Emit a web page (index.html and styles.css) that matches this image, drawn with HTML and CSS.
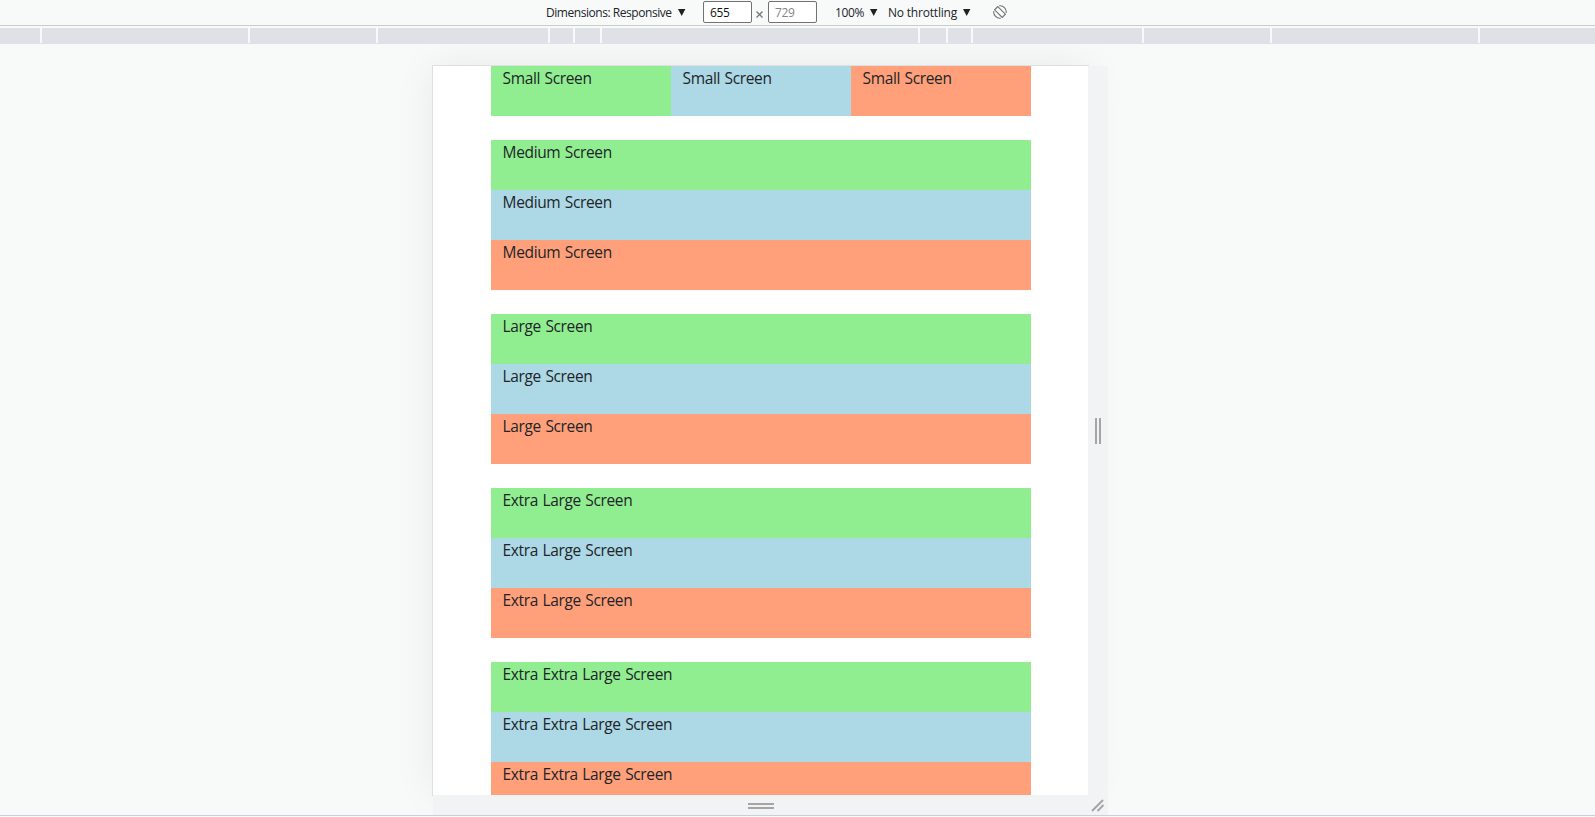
FILE: index.html
```
<!DOCTYPE html>
<html lang="en">
<head>
<meta charset="utf-8">
<title>Responsive grid</title>
<link rel="stylesheet" href="styles.css">
</head>
<body>
<header class="toolbar">
  <span class="label label-dimensions">Dimensions: Responsive</span>
  <svg class="caret caret-dimensions" viewBox="0 0 8 7"><path d="M0 0h7.4L3.7 7z"/></svg>
  <span class="size">655</span>
  <svg class="times" viewBox="0 0 7 7"><path d="M.5.5l6 6M6.5.5L.5 6.5"/></svg>
  <span class="size size-muted">729</span>
  <span class="label label-zoom">100%</span>
  <svg class="caret caret-zoom" viewBox="0 0 8 7"><path d="M0 0h7.4L3.7 7z"/></svg>
  <span class="label label-throttle">No throttling</span>
  <svg class="caret caret-throttle" viewBox="0 0 8 7"><path d="M0 0h7.4L3.7 7z"/></svg>
  <svg class="rotate" viewBox="0 0 14 14"><path d="M4.8 1.6L12.4 9.2L9.2 12.4L1.6 4.8zM6.2.8A6.2 6.2 0 0 1 13.2 7.8M.8 6.2A6.2 6.2 0 0 0 7.8 13.2"/></svg>
</header>
<div class="ruler">
  <i style="width:40px"></i><i style="width:206px"></i><i style="width:126px"></i><i style="width:170px"></i><i style="width:23px"></i><i style="width:25px"></i><i style="width:316px"></i><i style="width:26px"></i><i style="width:23px"></i><i style="width:169px"></i><i style="width:126px"></i><i style="width:206px"></i><i style="width:115px"></i>
</div>
<main class="stage">
  <div class="device">
    <div class="screen">
      <div class="container">
        <section class="row row-split"><div class="col green">Small Screen</div><div class="col blue">Small Screen</div><div class="col salmon">Small Screen</div></section>
        <section class="row"><div class="col green">Medium Screen</div><div class="col blue">Medium Screen</div><div class="col salmon">Medium Screen</div></section>
        <section class="row"><div class="col green">Large Screen</div><div class="col blue">Large Screen</div><div class="col salmon">Large Screen</div></section>
        <section class="row"><div class="col green">Extra Large Screen</div><div class="col blue">Extra Large Screen</div><div class="col salmon">Extra Large Screen</div></section>
        <section class="row"><div class="col green">Extra Extra Large Screen</div><div class="col blue">Extra Extra Large Screen</div><div class="col salmon">Extra Extra Large Screen</div></section>
      </div>
    </div>
    <div class="handle"><span class="grip grip-side"></span></div>
    <div class="handle"><span class="grip grip-bottom"></span></div>
    <div class="handle handle-corner"><svg class="corner" viewBox="0 0 14 13"><path d="M1 12L12 1M6.5 12L12.5 6"/></svg></div>
  </div>
</main>
</body>
</html>
```
FILE: styles.css
```
* { box-sizing: border-box; }
body {
  margin: 0;
  height: 817px;
  overflow: hidden;
  background: #f8faf9;
  color: #212529;
  font-family: "Open Sans", "Noto Sans", sans-serif;
}
.toolbar {
  height: 26px;
  padding: 0 0 1px 546px;
  border-bottom: 1px solid #cacdcc;
  display: flex;
  align-items: center;
  font-size: 12px;
  line-height: 24px;
  white-space: nowrap;
}
.toolbar > * { flex: none; }
.label { padding-top: 1px; }
.label-dimensions { width: 132px; letter-spacing: -0.45px; }
.caret { width: 8px; height: 7px; fill: #202124; }
.caret-dimensions { margin-right: 17px; }
.size {
  width: 49px;
  height: 22px;
  padding-left: 6px;
  border: 1px solid #707274;
  border-radius: 2px;
  background: #fff;
  color: #111;
  line-height: 22px;
  letter-spacing: -0.4px;
}
.size-muted { color: #858585; }
.times { width: 7px; height: 7px; margin: 5px 5px 0 4px; fill: none; stroke: #77797b; stroke-width: 1.4; }
.label-zoom { width: 35px; margin-left: 18px; letter-spacing: -0.4px; }
.caret-zoom { margin-right: 10px; }
.label-throttle { width: 75px; letter-spacing: -0.2px; }
.caret-throttle { margin-right: 22px; }
.rotate { width: 14px; height: 14px; fill: none; stroke: #6e7072; stroke-width: 1.1; }
.ruler {
  height: 16px;
  margin-top: 2px;
  border-bottom: 1px solid #dee1e6;
  display: flex;
  gap: 2px;
}
.ruler i { flex: none; background: #dee1e6; }
.stage {
  height: 772px;
  padding: 22px 0 0 433px;
  border-bottom: 1px solid #c9cfd8;
  overflow: hidden;
}
.device {
  width: 675px;
  height: 749px;
  display: grid;
  grid-template: 729px 20px / 655px 20px;
}
.screen {
  overflow: hidden;
  background: #fff;
  box-shadow: 0 0 0 1px #dfe1e0, 0 0 40px rgba(0, 0, 0, 0.07);
}
.container {
  width: 540px;
  margin-left: 58px;
  display: flex;
  flex-direction: column;
  gap: 24px;
  font-size: 15.5px;
  line-height: 24px;
  letter-spacing: -0.36px;
  word-spacing: 0.8px;
}
.row-split { display: grid; grid-template-columns: repeat(3, 1fr); }
.col { height: 50px; padding-left: 11.6px; }
.green { background: #90ee90; }
.blue { background: #add8e6; }
.salmon { background: #ffa07a; }
.handle {
  z-index: 1;
  display: flex;
  align-items: center;
  justify-content: center;
  background: #f1f3f5;
}
.grip { border: 0 solid #a5a5a5; }
.grip-side { width: 6px; height: 26px; margin-right: 1px; border-width: 0 2px; }
.grip-bottom { width: 26px; height: 6px; margin-top: 2px; border-width: 2px 0; }
.corner { width: 14px; height: 13px; margin: 1px 1px 0 0; fill: none; stroke: #a5a5a5; stroke-width: 2; }
```
